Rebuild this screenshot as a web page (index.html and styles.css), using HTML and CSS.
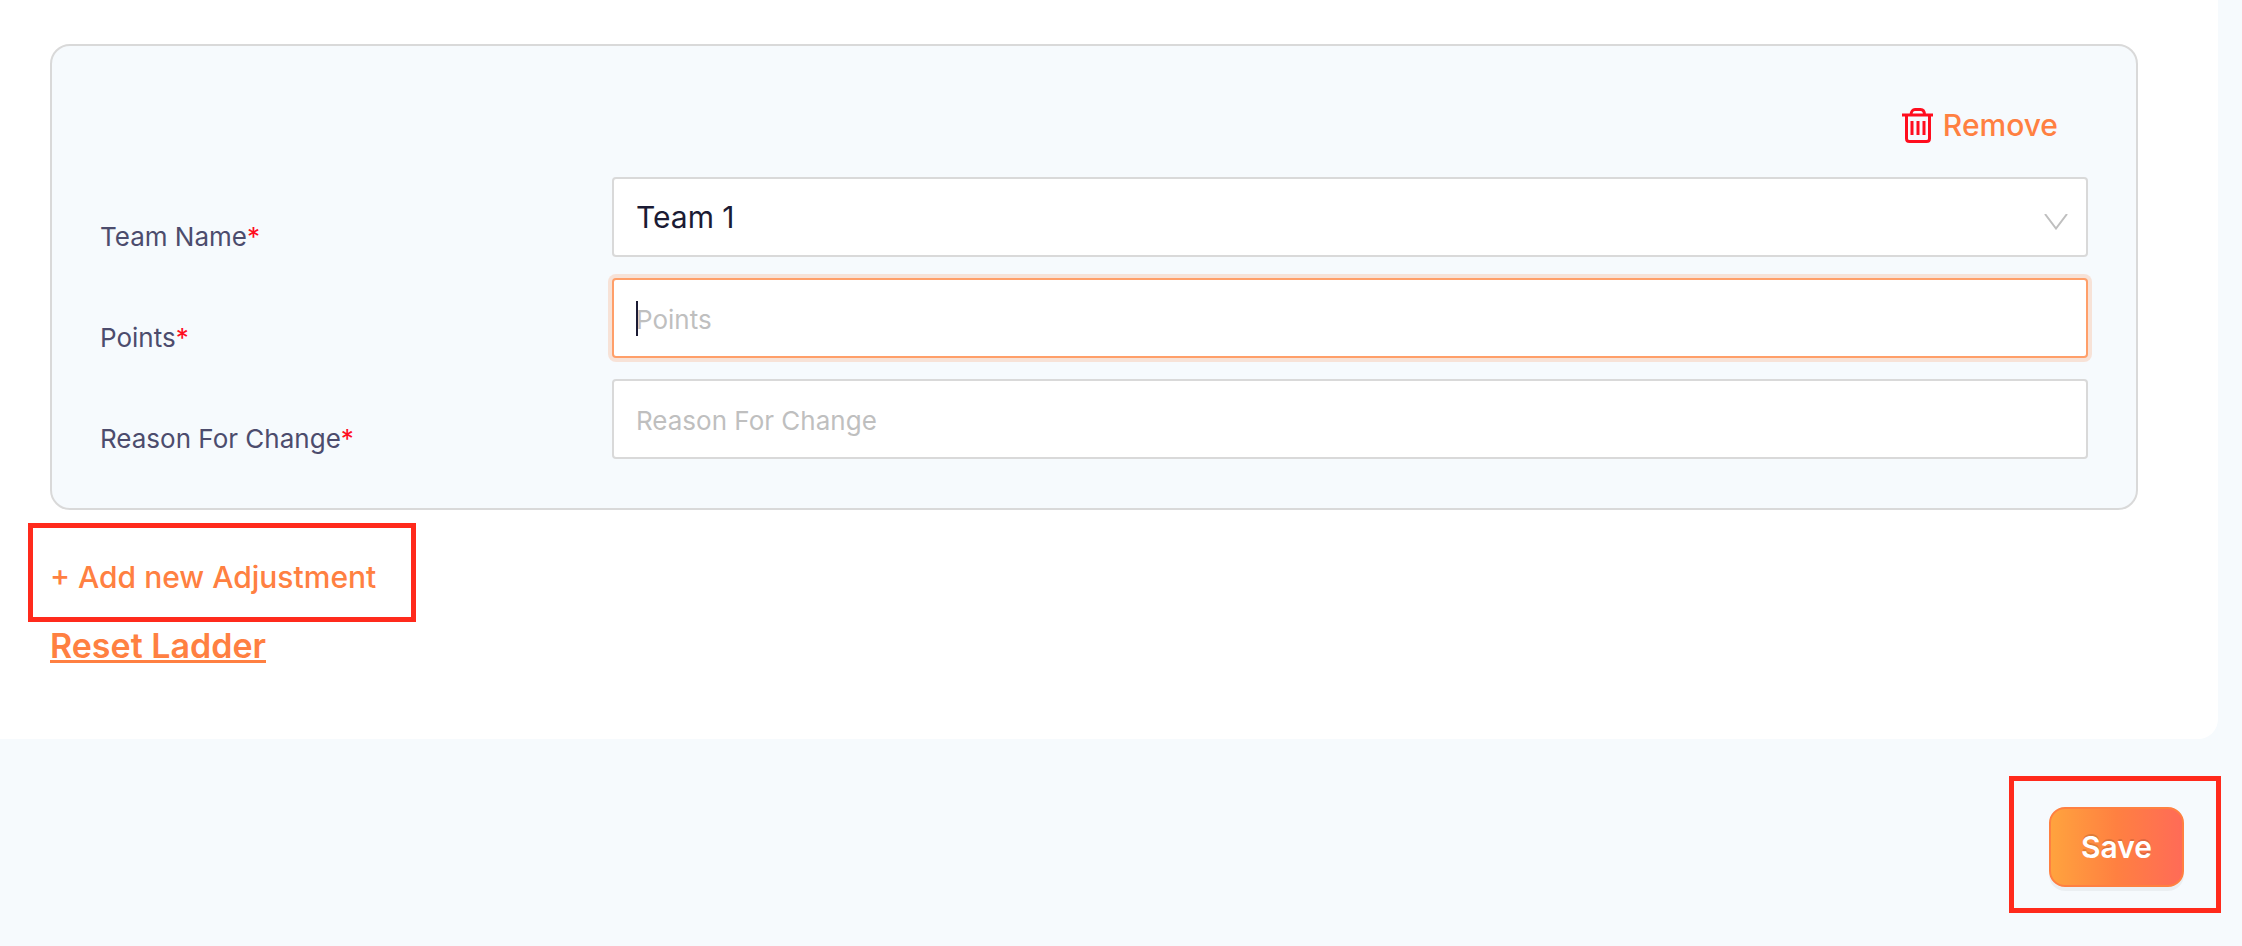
FILE: index.html
```html
<!DOCTYPE html>
<html lang="en">
<head>
  <meta charset="UTF-8">
  <title>Ladder Adjustments</title>
  <meta name="viewport" content="width=device-width, initial-scale=1.0">
  <link rel="stylesheet" href="styles.css">
</head>
<body>

  <form class="ladder-form">
    <div class="panel">

      <!-- Adjustment card -->
      <div class="card">
        <div class="card-top">
          <button type="button" class="remove-btn">
            <svg class="trash-icon" viewBox="0 0 32 36" fill="none" stroke="#ff0d1e" stroke-width="3">
              <path d="M0 8H31"/>
              <path d="M9 8C9 4.500 11 2.500 13 2.500H18.500C21 2.500 22.500 4.500 22.500 8"/>
              <path d="M4.500 8V31.500Q4.500 34.500 7.500 34.500H24.500Q27.500 34.500 27.500 31.500V8"/>
              <path d="M10 14V28M16 14V28M22 14V28"/>
            </svg>
            Remove
          </button>
        </div>

        <div class="field">
          <label for="team">Team Name<span class="required">*</span></label>
          <div class="control">
            <select id="team">
              <option>Team 1</option>
            </select>
            <svg class="arrow" viewBox="0 0 24 16" fill="none" stroke="#bfbfbf" stroke-width="2">
              <path d="M1 0L12 14.500L23 0"/>
            </svg>
          </div>
        </div>

        <div class="field">
          <label for="points">Points<span class="required">*</span></label>
          <div class="control">
            <input type="text" id="points" class="focused" placeholder="Points">
            <span class="caret"></span>
          </div>
        </div>

        <div class="field">
          <label for="reason">Reason For Change<span class="required">*</span></label>
          <div class="control">
            <input type="text" id="reason" placeholder="Reason For Change">
          </div>
        </div>
      </div>

      <div class="actions">
        <button type="button" class="add-btn marked">+ Add new Adjustment</button>
        <a href="#" class="reset-link">Reset Ladder</a>
      </div>
    </div>

    <!-- Footer -->
    <div class="footer">
      <div class="marked">
        <button type="submit" class="save-btn">Save</button>
      </div>
    </div>
  </form>

</body>
</html>
```
FILE: styles.css
```css
* {
  box-sizing: border-box;
}

body {
  font-family: Inter, "Liberation Sans", sans-serif;
  font-size: 26px;
  background: #f6fafd;
  color: #4c4c6d;
  margin: 0;
}

button, input, select {
  font-family: inherit;
}

button {
  background: none;
  border: none;
  padding: 0;
  cursor: pointer;
}

.panel {
  background: #fff;
  margin-right: 24px;
  padding: 44px 80px 73px 50px;
  border-bottom-right-radius: 20px;
}

.card {
  display: flex;
  flex-direction: column;
  gap: 21px;
  padding: 48px 48px 49px;
  background: #f6fafd;
  border: 2px solid #d9d9d9;
  border-radius: 20px;
}

.card-top {
  display: flex;
  justify-content: flex-end;
  height: 62px;
  padding-right: 30px;
}

.remove-btn {
  display: flex;
  align-items: center;
  gap: 9px;
  color: #ff8041;
  font-size: 30px;
  font-weight: 500;
}

.trash-icon {
  width: 32px;
  height: 36px;
}

.field {
  display: grid;
  grid-template-columns: 1fr 3fr;
  column-gap: 20px;
}

.field label {
  padding-top: 40px;
  line-height: 40px;
}

.required {
  color: #ff0d1e;
}

.control {
  position: relative;
}

input, select {
  display: block;
  width: 100%;
  height: 80px;
  padding: 0 22px;
  background: #fff;
  border: 2px solid #d9d9d9;
  border-radius: 4px;
  outline: none;
  color: #1b1b34;
}

input {
  padding-top: 2px;
  font-size: 26px;
}

input::placeholder {
  color: #bfbfbf;
}

select {
  appearance: none;
  font-size: 30px;
}

.focused {
  border-color: #ff9f69;
  box-shadow: 0 0 0 4px rgba(255, 128, 65, 0.2);
}

.caret {
  position: absolute;
  left: 24px;
  top: 23px;
  width: 2px;
  height: 35px;
  background: #1b1b34;
}

.arrow {
  position: absolute;
  right: 20px;
  top: 37px;
  width: 24px;
  height: 16px;
  pointer-events: none;
}

.actions {
  display: flex;
  flex-direction: column;
  align-items: flex-start;
  gap: 29px;
  margin-top: 47px;
}

.add-btn {
  color: #ff8041;
  font-size: 30px;
  font-weight: 500;
  line-height: 40px;
}

.reset-link {
  color: #ff8041;
  font-size: 34px;
  font-weight: 600;
  line-height: 40px;
}

.footer {
  display: flex;
  justify-content: flex-end;
  padding: 68px 58px 59px;
}

/* red frame round the highlighted actions */
.marked {
  position: relative;
}

.marked::after {
  content: "";
  position: absolute;
  inset: -31px -37px -26px -40px;
  border: 5px solid #ff2a1c;
  pointer-events: none;
}

.add-btn.marked::after {
  inset: -34px -40px -25px -22px;
}

.save-btn {
  height: 80px;
  padding: 0 30px;
  border: 2px solid #ff8041;
  border-radius: 16px;
  background: linear-gradient(90deg, #ffa33e, #ff8041 50%, #ff6b57);
  box-shadow: 0 4px 0 rgba(0, 0, 0, 0.045);
  color: #fff;
  font-size: 30px;
  font-weight: 600;
  text-shadow: 0 -2px 0 rgba(0, 0, 0, 0.12);
}
```
